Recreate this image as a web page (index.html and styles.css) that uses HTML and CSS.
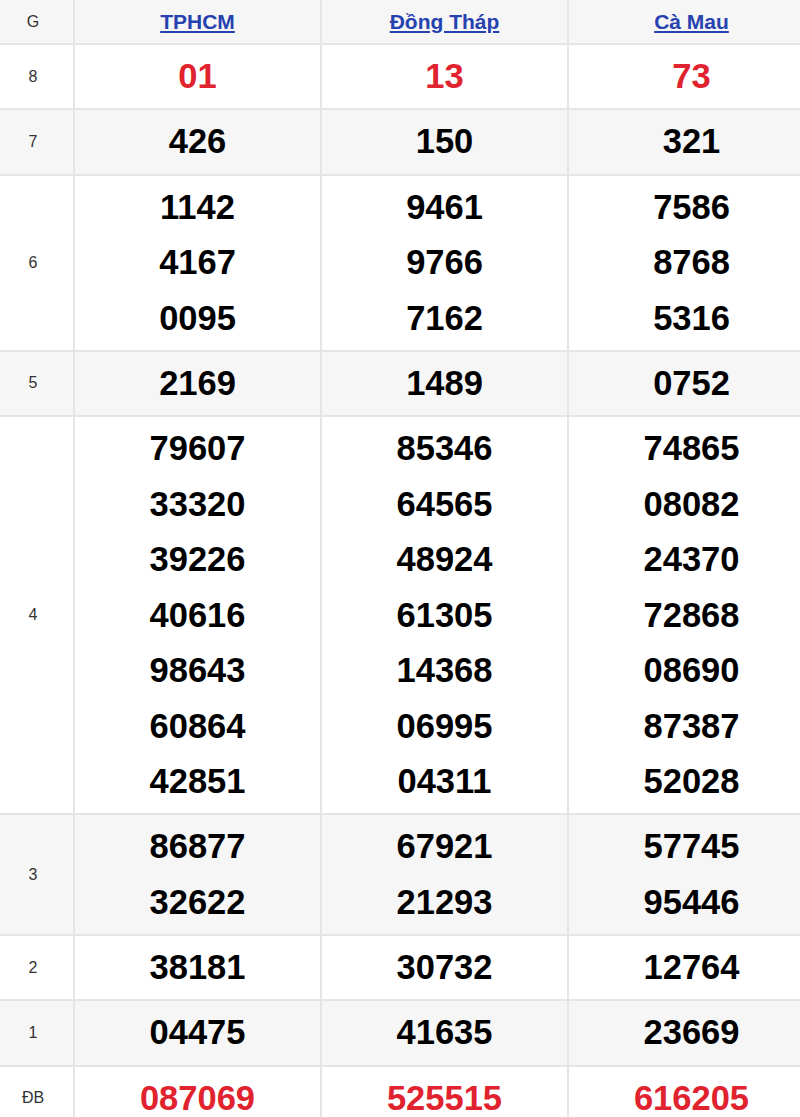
FILE: index.html
```html
<!DOCTYPE html>
<html lang="vi">
<head>
<meta charset="utf-8">
<title>Kết quả xổ số</title>
<link rel="stylesheet" href="styles.css">
</head>
<body>
<div class="wrap">
<table class="kq">
  <colgroup>
    <col class="c-g">
    <col class="c-p">
    <col class="c-p">
    <col class="c-p">
  </colgroup>
  <thead>
    <tr class="alt head">
      <th class="lbl">G</th>
      <th><a href="#">TPHCM</a></th>
      <th><a href="#">Đồng Tháp</a></th>
      <th><a href="#">Cà Mau</a></th>
    </tr>
  </thead>
  <tbody>
    <tr>
      <td class="lbl">8</td>
      <td class="num red"><div>01</div></td>
      <td class="num red"><div>13</div></td>
      <td class="num red"><div>73</div></td>
    </tr>
    <tr class="alt">
      <td class="lbl">7</td>
      <td class="num"><div>426</div></td>
      <td class="num"><div>150</div></td>
      <td class="num"><div>321</div></td>
    </tr>
    <tr>
      <td class="lbl">6</td>
      <td class="num"><div>1142</div><div>4167</div><div>0095</div></td>
      <td class="num"><div>9461</div><div>9766</div><div>7162</div></td>
      <td class="num"><div>7586</div><div>8768</div><div>5316</div></td>
    </tr>
    <tr class="alt">
      <td class="lbl">5</td>
      <td class="num"><div>2169</div></td>
      <td class="num"><div>1489</div></td>
      <td class="num"><div>0752</div></td>
    </tr>
    <tr>
      <td class="lbl">4</td>
      <td class="num"><div>79607</div><div>33320</div><div>39226</div><div>40616</div><div>98643</div><div>60864</div><div>42851</div></td>
      <td class="num"><div>85346</div><div>64565</div><div>48924</div><div>61305</div><div>14368</div><div>06995</div><div>04311</div></td>
      <td class="num"><div>74865</div><div>08082</div><div>24370</div><div>72868</div><div>08690</div><div>87387</div><div>52028</div></td>
    </tr>
    <tr class="alt">
      <td class="lbl">3</td>
      <td class="num"><div>86877</div><div>32622</div></td>
      <td class="num"><div>67921</div><div>21293</div></td>
      <td class="num"><div>57745</div><div>95446</div></td>
    </tr>
    <tr>
      <td class="lbl">2</td>
      <td class="num"><div>38181</div></td>
      <td class="num"><div>30732</div></td>
      <td class="num"><div>12764</div></td>
    </tr>
    <tr class="alt">
      <td class="lbl">1</td>
      <td class="num"><div>04475</div></td>
      <td class="num"><div>41635</div></td>
      <td class="num"><div>23669</div></td>
    </tr>
    <tr>
      <td class="lbl">ĐB</td>
      <td class="num red"><div>087069</div></td>
      <td class="num red"><div>525515</div></td>
      <td class="num red"><div>616205</div></td>
    </tr>
  </tbody>
</table>
</div>
</body>
</html>
```
FILE: styles.css
```css
html, body {
  margin: 0;
  padding: 0;
  background: #ffffff;
  overflow: hidden;
}

.wrap {
  width: 800px;
  overflow: hidden;
}

.kq {
  border-collapse: collapse;
  table-layout: fixed;
  width: 823px;
  margin: -2px 0 0 -9px;
  font-family: Arial, "Liberation Sans", sans-serif;
}

.c-g { width: 82px; }
.c-p { width: 247px; }

.kq th,
.kq td {
  border: 2px solid #e5e5e5;
  text-align: center;
  vertical-align: middle;
  padding: 0;
}

.alt { background: #f6f6f6; }

.head th {
  height: 43px;
  font-weight: normal;
}

.head a {
  color: #2742b0;
  font-weight: bold;
  font-size: 21px;
  text-decoration: underline;
  text-underline-offset: 2px;
}

.lbl {
  font-size: 16px;
  color: #333333;
}

.num {
  padding: 4px 0 3.75px !important;
  font-size: 34.5px;
  font-weight: bold;
  color: #000000;
}

.num div {
  line-height: 55.5px;
}

.num.red { color: #e0232e; }
```
